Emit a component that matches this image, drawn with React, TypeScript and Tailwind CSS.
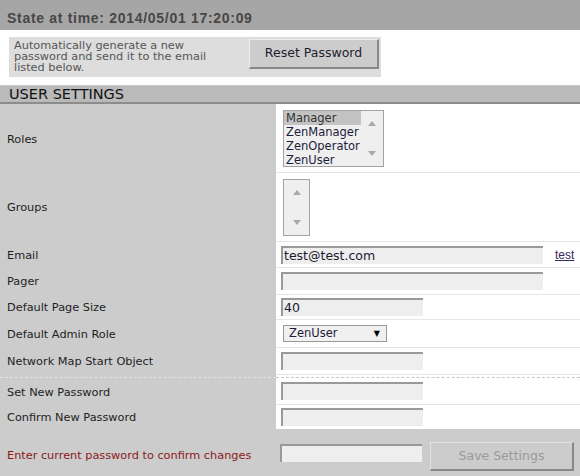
import React from "react";

// small grey scroll arrows used by the list boxes
const Arrow = ({ down }: { down?: boolean }) => (
  <svg width="8" height="5" viewBox="0 0 8 5">
    <polygon points={down ? "0,0 8,0 4,5" : "4,0 8,5 0,5"} fill="#a9a9a9" />
  </svg>
);

const Field = ({ w, value }: { w: string; value?: string }) => (
  <div className={`${w} h-[18px] bg-[#eeeeee] border-t-2 border-l-2 border-[#999999] pl-[1px] text-[12.5px] leading-[16px] text-[#1a1a2e]`}>
    {value}
  </div>
);

const Row = ({ label, h, children, first }: { label: string; h: string; children?: React.ReactNode; first?: boolean }) => (
  <div className={`flex ${h}`}>
    <div className="w-[276px] bg-[#cccccc] pl-[7px] pt-[4px] flex items-center text-[#1e1e1e]">{label}</div>
    <div className={`flex-1 bg-white pl-[5px] flex items-center ${first ? "" : "border-t border-[#e6e6e6]"}`}>{children}</div>
  </div>
);

export default function App() {
  const roles = ["Manager", "ZenManager", "ZenOperator", "ZenUser"];

  return (
    <div className="w-[580px] h-[476px] overflow-hidden bg-white font-['DejaVu_Sans',sans-serif] text-[11.3px]">
      {/* state bar */}
      <div className="h-[30px] bg-[#a6a6a6] pl-[7px] pt-[10px] font-['Liberation_Sans',sans-serif] font-bold text-[14px] tracking-[0.7px] leading-[16px] text-[#474747]">
        State at time: 2014/05/01 17:20:09
      </div>

      {/* reset password */}
      <div className="h-[55px] bg-white pt-[7px] pl-[9px]">
        <div className="w-[372px] h-[40px] bg-[#dddddd] flex justify-between">
          <div className="pl-[5px] pt-[3px] leading-[11px] text-[#555555] w-[212px]">
            Automatically generate a new password and send it to the email listed below.
          </div>
          <div className="mt-[2px] mr-[2px] w-[130px] h-[30px] bg-[#cccccc] border-t border-l border-[#ececec] border-r-2 border-b-2 border-r-[#888888] border-b-[#888888] flex items-center justify-center text-[12.5px] text-[#1e1e2e]">
            Reset Password
          </div>
        </div>
      </div>

      {/* section header */}
      <div className="h-[19px] bg-[#bababa] border-t border-[#c9c9c9] border-b-2 border-b-[#8c8c8c] pl-[9px] text-[14.5px] leading-[16px] text-[#111]">
        USER SETTINGS
      </div>

      <Row label="Roles" h="h-[68px]" first>
        <div className="ml-[2px] w-[101px] h-[57px] border border-[#a3a3a3] bg-[#efefef] flex">
          <div className="w-[77px] text-[11.5px] leading-[14px] text-[#1c1c3a]">
            {roles.map((r, i) => (
              <div key={r} className={`pl-[2px] ${i === 0 ? "bg-[#c3c3c3] text-[#333]" : ""}`}>{r}</div>
            ))}
          </div>
          <div className="flex-1 flex flex-col items-center justify-between pt-[10px] pb-[10px]">
            <Arrow />
            <Arrow down />
          </div>
        </div>
      </Row>
      <Row label="Groups" h="h-[69px]">
        <div className="ml-[2px] w-[27px] h-[57px] border border-[#a3a3a3] bg-[#efefef] flex flex-col items-center justify-between pt-[10px] pb-[10px]">
          <Arrow />
          <Arrow down />
        </div>
      </Row>
      <Row label="Email" h="h-[26px]">
        <Field w="w-[262px]" value="test@test.com" />
        <span className="ml-[12px] font-['Liberation_Sans',sans-serif] text-[12px] underline text-[#35285a]">test</span>
      </Row>
      <Row label="Pager" h="h-[27px]">
        <Field w="w-[262px]" />
      </Row>
      <Row label="Default Page Size" h="h-[25px]">
        <Field w="w-[142px]" value="40" />
      </Row>
      <Row label="Default Admin Role" h="h-[28px]">
        <div className="ml-[2px] w-[104px] h-[17px] border border-[#999999] bg-[#f0f0f0] flex items-center justify-between pl-[5px] pr-[6px] text-[11.5px] text-[#1c1c3a]">
          <span>ZenUser</span>
          <span className="text-[8px] text-black">▼</span>
        </div>
      </Row>
      <Row label="Network Map Start Object" h="h-[27px]">
        <Field w="w-[142px]" />
      </Row>

      {/* dashed separator */}
      <div className="flex h-[4px]">
        <div className="w-[276px] bg-[#cccccc] border-t-2 border-[#cccccc] pt-[1px]">
          <div className="border-t border-dashed border-[#e0e0e0]" />
        </div>
        <div className="flex-1 bg-white border-t border-[#e6e6e6] pt-[2px]">
          <div className="border-t border-dashed border-[#c8c8c8]" />
        </div>
      </div>

      <Row label="Set New Password" h="h-[26px]" first>
        <Field w="w-[142px]" />
      </Row>
      <Row label="Confirm New Password" h="h-[25px]">
        <Field w="w-[142px]" />
      </Row>

      {/* confirm with current password */}
      <div className="h-[47px] bg-[#cccccc] flex">
        <div className="w-[280px] pl-[7px] pt-[19px] text-[#8b1a1a]">Enter current password to confirm changes</div>
        <div className="pt-[15px]">
          <Field w="w-[142px]" />
        </div>
        <div className="ml-[8px] mt-[13px] w-[144px] h-[29px] bg-[#cccccc] border-t border-l border-[#e2e2e2] border-r-2 border-b-2 border-r-[#888888] border-b-[#888888] flex items-center justify-center text-[12.5px] text-[#9a9a9a]">
          Save Settings
        </div>
      </div>
    </div>
  );
}
